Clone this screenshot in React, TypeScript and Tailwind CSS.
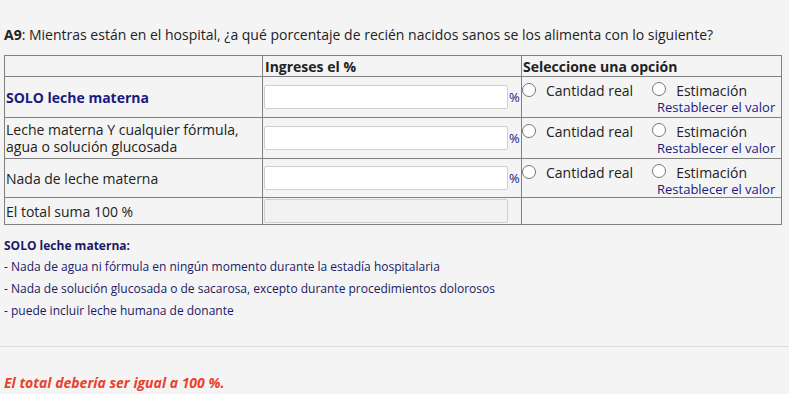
import React from "react";

const Radio = () => (
  <span className="inline-block w-[14px] h-[14px] rounded-full border border-[#767676] bg-white shrink-0" />
);

const Options = () => (
  <div className="flex flex-col">
    <div className="flex items-center h-[20px]">
      <Radio />
      <span className="ml-[10px] text-[14px] text-[#222]">Cantidad real</span>
      <span className="ml-[19px]"><Radio /></span>
      <span className="ml-[10px] text-[14px] text-[#222]">Estimación</span>
    </div>
    <div className="pl-[135px] text-[13px] leading-[14px] text-[#1a1a80]">Restablecer el valor</div>
  </div>
);

const InputCell = ({ disabled }: { disabled?: boolean }) => (
  <div className="flex items-center">
    <div
      className={
        disabled
          ? "ml-[1px] w-[244px] h-[24px] rounded-[2px] border border-[#cfcfcf] bg-[#f2f2f2]"
          : "ml-[1px] w-[244px] h-[24px] rounded-[2px] border border-[#cfcfcf] bg-white"
      }
    />
    {!disabled && <span className="ml-[1px] text-[13px] text-[#1a1a80]">%</span>}
  </div>
);

export default function App() {
  const rows = [
    { label: "SOLO leche materna", bold: true, h: "h-[41px]" },
    { label: "Leche materna Y cualquier fórmula, agua o solución glucosada", h: "h-[41px]" },
    { label: "Nada de leche materna", h: "h-[39px]" },
  ];
  return (
    <div
      className="w-[789px] h-[394px] bg-[#f4f4f4] text-[#222] overflow-hidden"
      style={{ fontFamily: '"Open Sans", "Liberation Sans", sans-serif' }}
    >
      <div className="pl-[4px] pt-[25px] text-[14px] leading-[20px]">
        <b>A9</b>: Mientras están en el hospital, ¿a qué porcentaje de recién nacidos sanos se los alimenta con lo siguiente?
      </div>
      <table className="ml-[4px] mt-[10px] w-[778px] border-collapse table-fixed text-[14px] leading-[17px]">
        <colgroup>
          <col className="w-[258px]" />
          <col className="w-[259px]" />
          <col className="w-[260px]" />
        </colgroup>
        <tbody>
          <tr className="h-[21px]">
            <td className="border border-[#808080]" />
            <td className="border border-[#808080] px-[2px] font-bold">Ingreses el %</td>
            <td className="border border-[#808080] px-[1px] font-bold">Seleccione una opción</td>
          </tr>
          {rows.map((r, i) => (
            <tr key={i} className={r.h}>
              <td
                className={
                  r.bold
                    ? "border border-[#808080] px-[1px] font-bold text-[#1a1a80]"
                    : "border border-[#808080] px-[1px]"
                }
              >
                {r.label}
              </td>
              <td className="border border-[#808080] p-0">
                <InputCell />
              </td>
              <td className="border border-[#808080] p-0 align-top pt-[3px]">
                <Options />
              </td>
            </tr>
          ))}
          <tr className="h-[27px]">
            <td className="border border-[#808080] px-[1px]">El total suma 100 %</td>
            <td className="border border-[#808080] p-0">
              <InputCell disabled />
            </td>
            <td className="border border-[#808080]" />
          </tr>
        </tbody>
      </table>
      <div className="pl-[4px] pt-[11px] text-[12px] text-[#1a1a66]">
        <div className="font-bold leading-[20px]">SOLO leche materna:</div>
        <div className="leading-[22px]">- Nada de agua ni fórmula en ningún momento durante la estadía hospitalaria</div>
        <div className="leading-[22px]">- Nada de solución glucosada o de sacarosa, excepto durante procedimientos dolorosos</div>
        <div className="leading-[22px]">- puede incluir leche humana de donante</div>
      </div>
      <div className="mt-[24px] border-t border-[#dcdcdc]" />
      <div className="pl-[4px] pt-[25px] text-[14px] font-bold italic text-[#e8412c]">
        El total debería ser igual a 100 %.
      </div>
    </div>
  );
}
